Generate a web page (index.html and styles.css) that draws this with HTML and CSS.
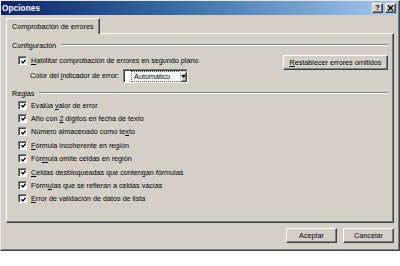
FILE: index.html
```html
<!DOCTYPE html>
<html lang="es">
<head>
<meta charset="utf-8">
<title>Opciones</title>
<link rel="stylesheet" href="styles.css">
</head>
<body>
<div class="dialog">
  <div class="titlebar">
    <span class="title">Opciones</span>
    <div class="tbtns">
      <span class="tbtn">?</span>
      <span class="tbtn"><svg width="7" height="6" viewBox="0 0 7 6"><path d="M1 0.5 L6 5.5 M6 0.5 L1 5.5" stroke="#000" stroke-width="1.4"/></svg></span>
    </div>
  </div>
  <div class="content">
    <div class="tabs"><div class="tab">Comprobación de errores</div></div>
    <div class="panel">
      <div class="group-head"><span>Configuración</span><span class="rule"></span></div>
      <div class="config">
        <div class="config-left">
          <div class="check"><span class="box"><svg width="5" height="5" viewBox="0 0 7 7"><path d="M0.5 3 L2.7 5.5 L6.5 0.8" fill="none" stroke="#000" stroke-width="1.8"/></svg></span><span><u>H</u>abilitar comprobación de errores en segundo plano</span></div>
          <div class="color-row">
            <span>Color del <u>i</u>ndicador de error:</span>
            <div class="select"><span class="sel-val"><span class="focus">Automático</span></span><span class="arrow"><svg width="5" height="3" viewBox="0 0 5 3"><path d="M0 0 H5 L2.5 3 Z" fill="#000"/></svg></span></div>
          </div>
        </div>
        <span class="btn reset"><u>R</u>establecer errores omitidos</span>
      </div>
      <div class="group-head rules-head"><span>Reglas</span><span class="rule"></span></div>
      <div class="rules">
        <div class="check"><span class="box"><svg width="5" height="5" viewBox="0 0 7 7"><path d="M0.5 3 L2.7 5.5 L6.5 0.8" fill="none" stroke="#000" stroke-width="1.8"/></svg></span><span>Evalúa <u>v</u>alor de error</span></div>
        <div class="check"><span class="box"><svg width="5" height="5" viewBox="0 0 7 7"><path d="M0.5 3 L2.7 5.5 L6.5 0.8" fill="none" stroke="#000" stroke-width="1.8"/></svg></span><span>Año con <u>2</u> dígitos en fecha de texto</span></div>
        <div class="check"><span class="box"><svg width="5" height="5" viewBox="0 0 7 7"><path d="M0.5 3 L2.7 5.5 L6.5 0.8" fill="none" stroke="#000" stroke-width="1.8"/></svg></span><span>Número almacenado como te<u>x</u>to</span></div>
        <div class="check"><span class="box"><svg width="5" height="5" viewBox="0 0 7 7"><path d="M0.5 3 L2.7 5.5 L6.5 0.8" fill="none" stroke="#000" stroke-width="1.8"/></svg></span><span><u>F</u>órmula incoherente en región</span></div>
        <div class="check"><span class="box"><svg width="5" height="5" viewBox="0 0 7 7"><path d="M0.5 3 L2.7 5.5 L6.5 0.8" fill="none" stroke="#000" stroke-width="1.8"/></svg></span><span>Fór<u>m</u>ula omite celdas en región</span></div>
        <div class="check"><span class="box"><svg width="5" height="5" viewBox="0 0 7 7"><path d="M0.5 3 L2.7 5.5 L6.5 0.8" fill="none" stroke="#000" stroke-width="1.8"/></svg></span><span><u>C</u>eldas desbloqueadas que contengan fórmulas</span></div>
        <div class="check"><span class="box"><svg width="5" height="5" viewBox="0 0 7 7"><path d="M0.5 3 L2.7 5.5 L6.5 0.8" fill="none" stroke="#000" stroke-width="1.8"/></svg></span><span>Fórm<u>u</u>las que se refieran a celdas vacías</span></div>
        <div class="check"><span class="box"><svg width="5" height="5" viewBox="0 0 7 7"><path d="M0.5 3 L2.7 5.5 L6.5 0.8" fill="none" stroke="#000" stroke-width="1.8"/></svg></span><span><u>E</u>rror de validación de datos de lista</span></div>
      </div>
    </div>
    <div class="footer">
      <span class="btn ok">Aceptar</span>
      <span class="btn cancel">Cancelar</span>
    </div>
  </div>
</div>
</body>
</html>
```

FILE: styles.css
```css
* { box-sizing: border-box; }
html, body { margin: 0; padding: 0; background: #fff; }
body {
  font-family: "Liberation Sans", Arial, sans-serif;
  font-size: 7.2px;
  color: #000;
}
u { text-decoration: underline; text-underline-offset: 1px; }

.dialog {
  width: 400px;
  height: 251px;
  background: #d4d0c8;
  border: 1px solid;
  border-color: #e8e6e0 #404040 #404040 #e8e6e0;
  box-shadow: inset -1px -1px #808080;
  display: flex;
  flex-direction: column;
}

.titlebar {
  height: 14px;
  margin: 0 1px 0 0;
  background: linear-gradient(to right, #0a246a, #3a6ea5 45%, #a6caf0);
  display: flex;
  align-items: center;
  justify-content: space-between;
  padding: 0 2px 0 1px;
}
.title {
  color: #fff;
  font-weight: bold;
  font-size: 8.2px;
  letter-spacing: 0.1px;
}
.tbtns { display: flex; gap: 2px; }
.tbtn {
  width: 11px;
  height: 10px;
  background: #d4d0c8;
  border: 1px solid;
  border-color: #fff #404040 #404040 #fff;
  box-shadow: inset -1px -1px #808080;
  display: flex;
  align-items: center;
  justify-content: center;
  font-weight: bold;
  font-size: 7.5px;
  line-height: 1;
}

.content {
  flex: 1;
  display: flex;
  flex-direction: column;
  padding: 3px 5px 0 5px;
}

.tabs { display: flex; height: 16px; position: relative; z-index: 1; }
.tab {
  height: 16px;
  padding: 0 5px 0 5px;
  white-space: nowrap;
  border: 1px solid;
  border-bottom: none;
  border-color: #fff #404040 transparent #fff;
  box-shadow: inset -1px 0 #808080;
  background: #d4d0c8;
  display: flex;
  align-items: center;
  border-radius: 1px 1px 0 0;
}

.panel {
  margin-top: -1px;
  height: 190px;
  border: 1px solid;
  border-color: #fff #404040 #404040 #fff;
  box-shadow: inset -1px -1px #808080;
  padding: 6px 5px 0 5px;
  display: flex;
  flex-direction: column;
}

.group-head {
  display: flex;
  align-items: center;
  gap: 5px;
  height: 10px;
}
.rule {
  flex: 1;
  height: 2px;
  border-top: 1px solid #808080;
  border-bottom: 1px solid #fff;
}

.config {
  display: flex;
  justify-content: space-between;
  align-items: flex-start;
  padding-left: 6px;
  margin-top: 4px;
}
.config-left { display: flex; flex-direction: column; }

.check {
  display: flex;
  align-items: center;
  gap: 4px;
  height: 13.4px;
}
.box {
  width: 9px;
  height: 9px;
  background: #fff;
  border: 1px solid;
  border-color: #808080 #fff #fff #808080;
  box-shadow: inset 1px 1px #404040;
  display: flex;
  align-items: center;
  justify-content: center;
  padding: 1px 0 0 1px;
  flex: none;
}
.box svg { display: block; }

.color-row {
  display: flex;
  align-items: center;
  gap: 4px;
  margin-top: 1px;
  padding-left: 12px;
  height: 15px;
}
.select {
  width: 65px;
  height: 14px;
  background: #fff;
  border: 1px solid;
  border-color: #808080 #fff #fff #808080;
  box-shadow: inset 1px 1px #404040;
  display: flex;
  align-items: center;
  padding: 1px 1px 0 2px;
}
.sel-val {
  flex: 1;
  display: flex;
  align-items: center;
  padding-left: 6px;
}
.focus {
  outline: 1px dotted #555;
  outline-offset: 0;
  padding: 0 10px 0 2px;
}
.arrow {
  width: 9px;
  height: 11px;
  background: #d4d0c8;
  border: 1px solid;
  border-color: #d4d0c8 #404040 #404040 #d4d0c8;
  box-shadow: inset 1px 1px #fff, inset -1px -1px #808080;
  display: flex;
  align-items: center;
  justify-content: center;
}
.arrow svg { display: block; }

.btn {
  display: flex;
  align-items: center;
  justify-content: center;
  height: 15px;
  background: #d4d0c8;
  border: 1px solid;
  border-color: #fff #404040 #404040 #fff;
  box-shadow: inset -1px -1px #808080;
}
.reset { width: 105px; margin-top: 1px; }

.rules-head { margin-top: 5px; }
.rules {
  display: flex;
  flex-direction: column;
  padding-left: 6px;
  margin-top: 0;
}

.footer {
  display: flex;
  justify-content: flex-end;
  gap: 6px;
  margin-top: 5px;
}
.ok { width: 51px; }
.cancel { width: 51px; }
```
